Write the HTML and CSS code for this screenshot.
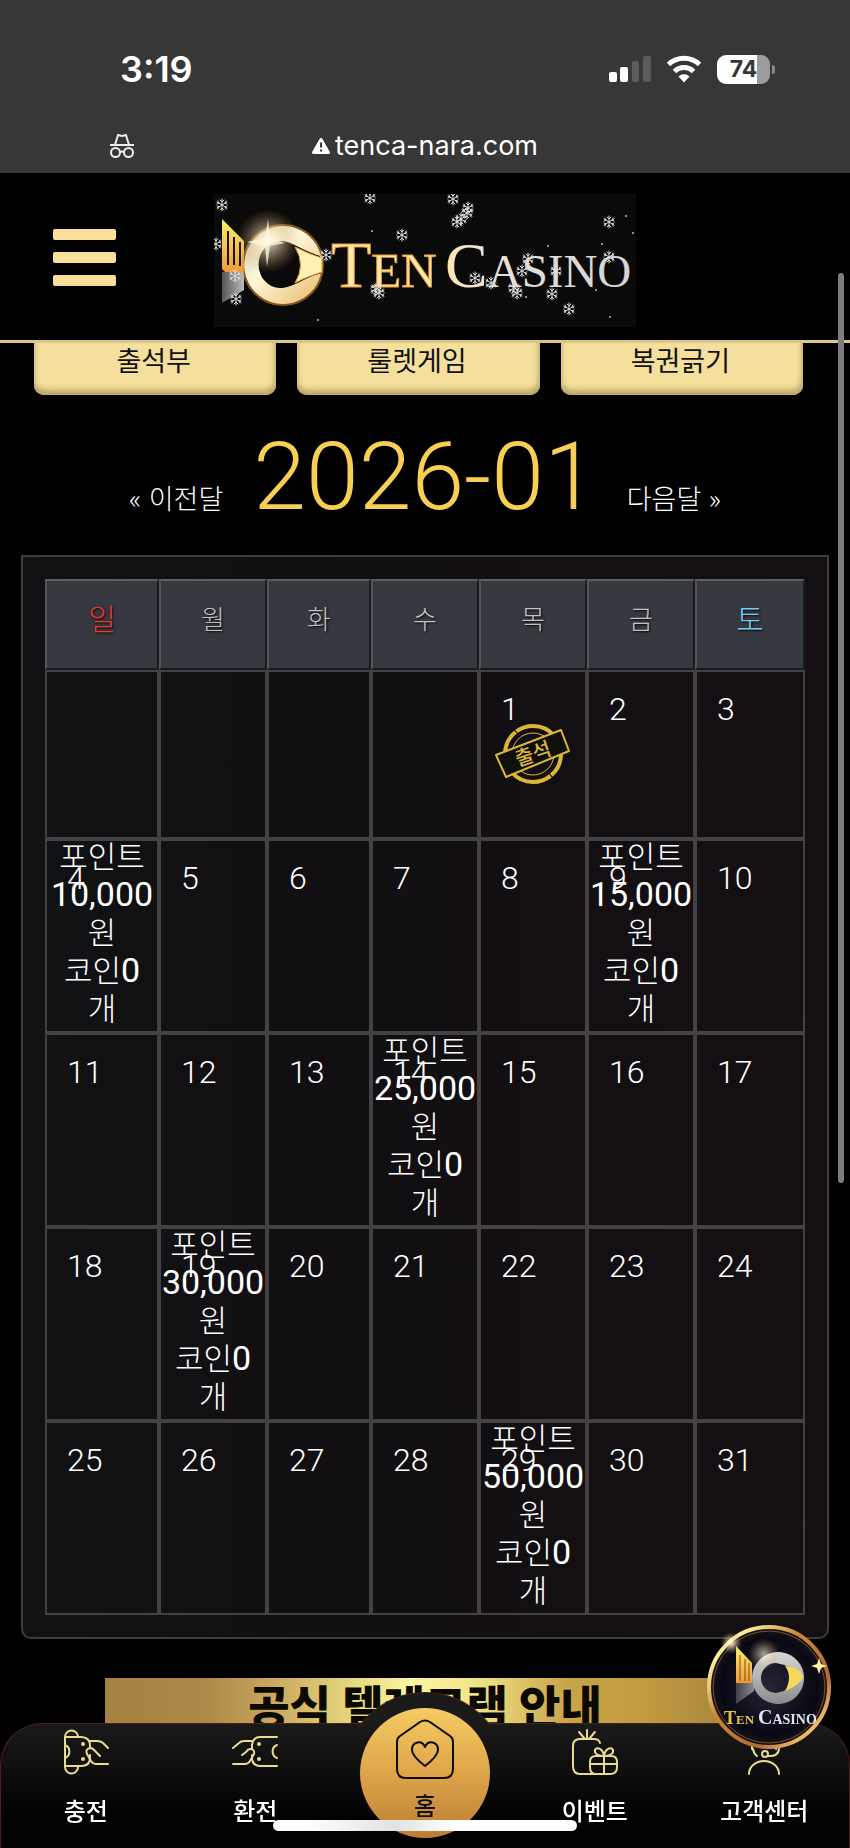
FILE: index.html
```html
<!DOCTYPE html>
<html lang="ko">
<head>
  <meta charset="UTF-8" />
  <meta name="viewport" content="width=device-width, initial-scale=1" />
  <title>TEN CASINO 출석부</title>
  <link rel="stylesheet" href="styles.css">
</head>
<body>

  <div class="phone-bar">
    <div class="status">
      <span class="clock">3:19</span>
      <div class="status-icons">
        <svg width="42" height="28" viewBox="0 0 42 28" fill="#fff">
          <rect x="0" y="17" width="8" height="10" rx="2" />
          <rect x="11" y="12" width="8" height="15" rx="2" />
          <rect x="23" y="6" width="7" height="21" rx="2" fill="#5c5c5c" />
          <rect x="34" y="1" width="8" height="26" rx="2" fill="#5c5c5c" />
        </svg>
        <svg width="36" height="28" viewBox="0 0 36 28">
          <path d="M2.500 9.500a22.500 22.500 0 0 1 31 0" fill="none" stroke="#fff" stroke-width="5" />
          <path d="M8.500 16.500a13.500 13.500 0 0 1 19 0" fill="none" stroke="#fff" stroke-width="5" />
          <path d="M12.500 21.500a8 8 0 0 1 11 0L18 27.500z" fill="#fff" />
        </svg>
        <span class="battery"><span>74</span></span>
      </div>
    </div>
    <div class="address">
      <svg class="private" width="26" height="26" viewBox="0 0 26 26" fill="none" stroke="#eee" stroke-width="2">
        <path d="M1 12h24M6 12l3-10 4 1 4-1 3 10" stroke-linejoin="round" />
        <circle cx="6.500" cy="19.500" r="4.500" />
        <circle cx="19.500" cy="19.500" r="4.500" />
        <path d="M11 19q2-1 4 0" />
      </svg>
      <span class="url">
        <svg width="18" height="16" viewBox="0 0 18 16">
          <path d="M9 1.500L16.500 14.500h-15z" fill="#fff" stroke="#fff" stroke-width="3" stroke-linejoin="round" />
          <path d="M9 4.500v5M9 11.500v2" stroke="#373737" stroke-width="2" />
        </svg>
        tenca-nara.com
      </span>
    </div>
  </div>

  <header class="header">
    <button class="menu" aria-label="메뉴"><i></i><i></i><i></i></button>
    <a class="logo" href="#" aria-label="TEN CASINO">
      <svg viewBox="0 0 422 133">
        <defs>
          <linearGradient id="gold" x1="0" y1="0" x2="0" y2="1">
            <stop offset="0" stop-color="#fff06a" />
            <stop offset="1" stop-color="#ee9a3c" />
          </linearGradient>
          <linearGradient id="ring" x1="0" y1="0" x2="1" y2="1">
            <stop offset="0" stop-color="#cbb995" />
            <stop offset=".4" stop-color="#fff8dc" />
            <stop offset="1" stop-color="#e9b865" />
          </linearGradient>
          <linearGradient id="word" x1="0" y1="0" x2="1" y2="0">
            <stop offset="0" stop-color="#ffe6b0" />
            <stop offset=".2" stop-color="#e8e2d8" />
            <stop offset="1" stop-color="#d4d4d6" />
          </linearGradient>
          <linearGradient id="gray" x1="0" y1="0" x2="1" y2="0">
            <stop offset="0" stop-color="#555" />
            <stop offset="1" stop-color="#bbb" />
          </linearGradient>
          <radialGradient id="flare">
            <stop offset="0" stop-color="#fff" />
            <stop offset=".3" stop-color="#fff3cc" stop-opacity=".7" />
            <stop offset="1" stop-color="#b98a4a" stop-opacity="0" />
          </radialGradient>
          <g id="snow" stroke="#dcdcdc" stroke-width="1" stroke-linecap="round">
            <path d="M0-6V6M-5-3L5 3M-5 3L5-3M-2-5L0-3L2-5M-2 5L0 3L2 5M-5-1L-3-2L-4-4M5-1L3-2L4-4M-5 1L-3 2L-4 4M5 1L3 2L4 4" fill="none" />
          </g>
        </defs>
        <rect width="422" height="133" fill="#0b0a0b" />
        <path d="M8 78h22v18l-22 13z" fill="url(#gray)" />
        <path d="M8 25l22 22v31H11l-3-3z" fill="url(#gold)" />
        <path d="M14 37v34M20 43v28M26 48v24" stroke="#1a1208" stroke-width="2" />
        <circle cx="69" cy="71" r="40" fill="none" stroke="#d88a22" stroke-width="2" opacity=".6" />
        <path d="M69 32a39 39 0 1 0 .1 0zM66 47c12 0 19 8 40 15l2 17c-20 5-28 15-42 15a21 23 0 0 1 0-47z" fill="url(#ring)" fill-rule="evenodd" />
        <path d="M81 53c9 4 17 8 27 11v14c-9 3-18 6-27 11q11-18 0-36z" fill="#fff0b4" stroke="#e2982f" />
        <circle cx="54" cy="47" r="32" fill="url(#flare)" opacity=".8" />
        <path d="M54 25l2 19 15 5-15 3-3 21-2-21-18-4 18-4z" fill="#fff8df" opacity=".8" />
        <g class="wordmark">
          <text class="ten" x="117" y="93" font-size="66">T<tspan font-size="49">EN</tspan></text>
          <text x="231" y="93" font-size="64" fill="url(#word)">C<tspan font-size="47">ASINO</tspan></text>
        </g>
        <use href="#snow" x="8" y="11" /><use href="#snow" x="156" y="4" /><use href="#snow" x="239" y="5" />
        <use href="#snow" x="254" y="14" /><use href="#snow" x="253" y="19" /><use href="#snow" x="247" y="25" /><use href="#snow" x="243" y="28" />
        <use href="#snow" x="188" y="41" /><use href="#snow" x="395" y="28" /><use href="#snow" x="2" y="50" />
        <use href="#snow" x="112" y="61" /><use href="#snow" x="21" y="82" /><use href="#snow" x="22" y="105" />
        <use href="#snow" x="162" y="95" /><use href="#snow" x="165" y="99" /><use href="#snow" x="261" y="84" />
        <use href="#snow" x="277" y="89" /><use href="#snow" x="308" y="77" /><use href="#snow" x="314" y="65" />
        <use href="#snow" x="300" y="94" /><use href="#snow" x="303" y="99" /><use href="#snow" x="342" y="77" />
        <use href="#snow" x="338" y="100" /><use href="#snow" x="355" y="115" /><use href="#snow" x="395" y="63" />
        <g fill="#bbb">
          <circle cx="158" cy="37" r="1" /><circle cx="334" cy="52" r="1" /><circle cx="412" cy="22" r="1" />
          <circle cx="388" cy="50" r="1" /><circle cx="382" cy="96" r="1" /><circle cx="396" cy="123" r="1" />
          <circle cx="104" cy="126" r="1" /><circle cx="312" cy="103" r="1" /><circle cx="419" cy="39" r="1" />
        </g>
      </svg>
    </a>
  </header>

  <main>
    <div class="tabs">
      <button>출석부</button>
      <button>룰렛게임</button>
      <button>복권긁기</button>
    </div>

    <div class="month">
      <a href="#">« 이전달</a>
      <h1>2026-01</h1>
      <a href="#">다음달 »</a>
    </div>

    <div class="panel">
      <table class="calendar">
        <colgroup>
          <col class="c-sun"><col class="c-day"><col class="c-tue"><col class="c-day"><col class="c-day"><col class="c-day"><col class="c-sat">
        </colgroup>
        <thead>
          <tr>
            <th class="sun">일</th><th>월</th><th>화</th><th>수</th><th>목</th><th>금</th><th class="sat">토</th>
          </tr>
        </thead>
        <tbody>
          <tr class="first">
            <td></td><td></td><td></td><td></td>
            <td>
              <span class="day">1</span>
              <svg class="stamp" width="76" height="62" viewBox="0 0 76 62">
                <g fill="none" stroke="#dcb63a">
                  <circle cx="38" cy="31" r="28" stroke-width="4" stroke-dasharray="24 1 43 1 19 1" />
                  <circle cx="38" cy="31" r="21" stroke-width="1" />
                  <path d="M1 32L66 7l8 21L11 54z" fill="#0f0f0c" stroke-width="2" stroke-linejoin="round" />
                </g>
                <text x="38" y="38" text-anchor="middle" transform="rotate(-19 38 31)">출석</text>
              </svg>
            </td>
            <td><span class="day">2</span></td>
            <td><span class="day">3</span></td>
          </tr>
          <tr>
            <td><span class="day">4</span><p>포인트<br><b>10,000</b><br>원<br>코인<b>0</b><br>개</p></td>
            <td><span class="day">5</span></td>
            <td><span class="day">6</span></td>
            <td><span class="day">7</span></td>
            <td><span class="day">8</span></td>
            <td><span class="day">9</span><p>포인트<br><b>15,000</b><br>원<br>코인<b>0</b><br>개</p></td>
            <td><span class="day">10</span></td>
          </tr>
          <tr>
            <td><span class="day">11</span></td>
            <td><span class="day">12</span></td>
            <td><span class="day">13</span></td>
            <td><span class="day">14</span><p>포인트<br><b>25,000</b><br>원<br>코인<b>0</b><br>개</p></td>
            <td><span class="day">15</span></td>
            <td><span class="day">16</span></td>
            <td><span class="day">17</span></td>
          </tr>
          <tr>
            <td><span class="day">18</span></td>
            <td><span class="day">19</span><p>포인트<br><b>30,000</b><br>원<br>코인<b>0</b><br>개</p></td>
            <td><span class="day">20</span></td>
            <td><span class="day">21</span></td>
            <td><span class="day">22</span></td>
            <td><span class="day">23</span></td>
            <td><span class="day">24</span></td>
          </tr>
          <tr>
            <td><span class="day">25</span></td>
            <td><span class="day">26</span></td>
            <td><span class="day">27</span></td>
            <td><span class="day">28</span></td>
            <td><span class="day">29</span><p>포인트<br><b>50,000</b><br>원<br>코인<b>0</b><br>개</p></td>
            <td><span class="day">30</span></td>
            <td><span class="day">31</span></td>
          </tr>
        </tbody>
      </table>
    </div>

    <a class="banner" href="#">공식 텔레그램 안내</a>
  </main>

  <nav class="bottom-nav">
    <div class="bump"></div>
    <a href="#">
      <svg width="46" height="46" viewBox="0 0 46 46">
        <path d="M2 8v30M2 8a6 6 0 0 1 13 0M2 38a6 6 0 0 0 13 0M2 8h16q9 0 9 9v2M2 37h16q9 0 9-8v-3M2 16a7 7 0 0 1 0 13" />
        <path d="M26 12h8q4 0 6 2l5 5M45 35H33q-3 0-5-3l-4-7q-2-5 3-6 3 0 5 3l5 5" />
        <circle cx="20" cy="15" r="1" /><circle cx="20" cy="30" r="1" />
      </svg>
      <span>충전</span>
    </a>
    <a href="#">
      <svg width="46" height="46" viewBox="0 0 46 46">
        <path d="M45 8H28q-7 0-8 8v4M45 37H28q-7 0-8-7v-4M45 16a7 7 0 0 0 0 13" />
        <path d="M20 12h-8q-3 0-5 2l-6 5M1 35h12q3 0 5-3l4-7q1-5-4-5-2 0-4 3l-4 3" />
        <circle cx="27" cy="15" r="1" /><circle cx="27" cy="30" r="1" />
      </svg>
      <span>환전</span>
    </a>
    <a class="home" href="#">
      <svg width="60" height="60" viewBox="0 0 60 60">
        <path d="M5 17L25 3q5-3 10 0l20 14q3 2 3 6v27q0 9-9 9H11q-9 0-9-9V23q0-4 3-6z" />
        <path d="M30 47Q17 37 17 31c0-9 10-10 13-3 3-7 13-6 13 3q0 6-13 16z" />
      </svg>
      <span>홈</span>
    </a>
    <a href="#">
      <svg width="46" height="46" viewBox="0 0 46 46">
        <path d="M15 1v9M7 3l6 7M23 3l-6 7M28 14q-1-4-6-4H8q-7 0-7 7v20q0 8 7 8h30q7 0 7-7v-5q0-6-6-6H24q-6 0-6 6v5q0 7 6 7M18 35h27M32 27v18M32 27c-5 0-10-2-9-6 2-4 8-1 9 6zM32 27c5 0 10-2 9-6-2-4-8-1-9 6z" />
      </svg>
      <span>이벤트</span>
    </a>
    <a href="#">
      <svg width="46" height="46" viewBox="0 0 46 46">
        <path d="M8 45a15 13 0 0 1 30 0M12 20q1 5 4 7M11 20V15a12 12 0 0 1 24 0v5M38 20q-1 7-8 7h-3" />
        <circle cx="24" cy="25" r="3" />
      </svg>
      <span>고객센터</span>
    </a>
  </nav>

  <a class="chat" href="#" aria-label="TEN CASINO">
    <svg viewBox="0 0 124 124">
      <defs>
        <linearGradient id="rim" x1="0" y1="0" x2="1" y2="1">
          <stop offset="0" stop-color="#b07024" />
          <stop offset=".15" stop-color="#fff2a0" />
          <stop offset=".4" stop-color="#c98734" />
          <stop offset=".7" stop-color="#b36a34" />
          <stop offset=".9" stop-color="#ffd27a" />
          <stop offset="1" stop-color="#b07024" />
        </linearGradient>
        <linearGradient id="silver" x1="0" y1="0" x2="0" y2="1">
          <stop offset="0" stop-color="#d8d8d8" />
          <stop offset="1" stop-color="#8b8b8b" />
        </linearGradient>
        <radialGradient id="night">
          <stop offset="0" stop-color="#252535" />
          <stop offset=".8" stop-color="#090914" />
          <stop offset="1" stop-color="#19151a" />
        </radialGradient>
      </defs>
      <circle cx="62" cy="62" r="60" fill="url(#night)" stroke="url(#rim)" stroke-width="4" />
      <circle cx="62" cy="62" r="56" fill="none" stroke="#7e5221" stroke-width="1" />
      <path d="M29 56h18v10l-18 13z" fill="url(#gray)" opacity=".7" />
      <path d="M29 21l16 17v20H29z" fill="url(#gold)" />
      <path d="M33 30v26M38 34v22M42 38v18" stroke="#7d4b12" stroke-width="1" />
      <path d="M71 27a26 26 0 1 0 .1 0zM69 38q16 2 26 15-10 12-26 15a15 15 0 0 1 0-30z" fill="url(#silver)" fill-rule="evenodd" />
      <path d="M78 41q14 1 18 10-1 8-18 15 8-14 0-25z" fill="#f6d95c" />
      <circle cx="57" cy="29" r="16" fill="url(#flare)" opacity=".6" />
      <circle cx="24" cy="18" r="11" fill="url(#flare)" opacity=".9" />
      <path d="M112 33l2 6 6 2-6 2-2 6-2-6-6-2 6-2z" fill="#fff0a8" />
      <g class="wordmark small">
        <text class="ten" x="17" y="99" font-size="18">T<tspan font-size="13">EN</tspan></text>
        <text x="51" y="99" font-size="20">C<tspan font-size="14">ASINO</tspan></text>
      </g>
    </svg>
  </a>

  <div class="scroll-thumb"></div>
  <div class="home-indicator"></div>

</body>
</html>
```
FILE: styles.css
```css
* { box-sizing: border-box; }
body {
  margin: 0;
  background: #000;
  color: #fff;
  font-family: Roboto, "Noto Sans CJK KR", sans-serif;
  font-weight: 300;
}
a { color: inherit; text-decoration: none; }
button { font: inherit; border: none; cursor: pointer; }

/* phone top */
.phone-bar {
  height: 173px;
  padding-top: 48px;
  background: #373737;
  font-family: Inter, sans-serif;
}
.status {
  display: flex;
  align-items: center;
  justify-content: space-between;
  height: 42px;
  padding: 0 80px 0 120px;
}
.clock { font-size: 36px; font-weight: 600; }
.status-icons { display: flex; align-items: center; gap: 15px; }
.battery {
  position: relative;
  width: 53px;
  height: 29px;
  border-radius: 9px;
  background: linear-gradient(90deg, #fff 75%, #9c9c9c 75%);
  color: #373737;
  font-size: 23px;
  font-weight: 700;
  line-height: 29px;
  text-align: center;
}
.battery::after {
  content: "";
  position: absolute;
  right: -5px;
  top: 10px;
  width: 3px;
  height: 9px;
  border-radius: 0 4px 4px 0;
  background: #8c8c8c;
}
.address {
  position: relative;
  display: flex;
  justify-content: center;
  padding-top: 40px;
}
.private { position: absolute; left: 109px; top: 43px; }
.url {
  display: flex;
  align-items: center;
  gap: 5px;
  font-size: 27px;
  font-weight: 400;
  line-height: 32px;
}

/* header */
.header {
  position: sticky;
  top: 0;
  z-index: 2;
  display: flex;
  justify-content: center;
  align-items: center;
  height: 170px;
  padding-top: 8px;
  background: #000;
  border-bottom: 3px solid #d9c78a;
}
.menu {
  position: absolute;
  left: 53px;
  top: 56px;
  display: flex;
  flex-direction: column;
  gap: 12px;
  width: 63px;
  padding: 0;
  background: none;
}
.menu i { height: 11px; border-radius: 2px; background: #f8e09a; }
.logo { width: 50%; max-width: 422px; }
.logo svg, .chat svg { display: block; width: 100%; }
.wordmark { font-family: "Liberation Serif", serif; font-weight: 400; }
.wordmark .ten { fill: #ffe9ae; stroke: #e09a35; stroke-width: 1; }
.wordmark.small { fill: #e2e4ec; font-weight: 700; }
.wordmark.small .ten { fill: #e9c04e; stroke: none; }

/* tabs */
.tabs {
  display: flex;
  gap: 21px;
  margin-top: -19px;
  padding: 0 47px 0 34px;
}
.tabs button {
  flex: 1;
  height: 71px;
  padding: 0 3px 0 0;
  border-radius: 10px;
  background: #f4e09c;
  box-shadow: inset 0 -5px 6px #b9a566, inset -2px 0 4px #d5c27f;
  color: #111;
  font-size: 27px;
  font-weight: 400;
}

.month {
  display: flex;
  justify-content: center;
  align-items: baseline;
  gap: 30px;
  height: 160px;
  font-family: "Noto Sans CJK KR", sans-serif;
  font-size: 27px;
}
.month h1 {
  margin: 0;
  color: #f7cf52;
  font-family: Roboto, sans-serif;
  font-size: 95px;
  font-weight: 300;
  line-height: 164px;
}

/* calendar */
.panel {
  margin: 0 21px;
  padding: 22px;
  border: 2px solid #3d3c3f;
  border-radius: 0 0 10px 10px;
  background: linear-gradient(90deg, #101214, #120f12 30%, #130f12);
}
.calendar {
  width: 100%;
  table-layout: fixed;
  border-collapse: separate;
  border-spacing: 0;
}
.c-sun { width: 114px; }
.c-day { width: 108px; }
.c-tue { width: 104px; }
.c-sat { width: 110px; }
.calendar th {
  height: 91px;
  padding: 0 0 10px;
  background: #363840;
  border: 2px solid;
  border-color: #5d5e62 #191a1d #191a1d #55565b;
  color: #c4c4c4;
  font-size: 26px;
  font-weight: 300;
  line-height: 36px;
  text-shadow: 1px 1px 2px #000;
}
.calendar .sun { color: #ea3a30; font-size: 30px; }
.calendar .sat { color: #7cc8f4; font-size: 30px; }
.calendar td {
  position: relative;
  height: 194px;
  padding: 0;
  border: 2px solid #434144;
  vertical-align: top;
}
.calendar .first td { height: 169px; }
.calendar p {
  margin: -2px 0 0;
  font-size: 31px;
  line-height: 38px;
  text-align: center;
  white-space: nowrap;
}
.calendar b {
  font-size: 34px;
  font-weight: 400;
  line-height: 30px;
}
.day {
  position: absolute;
  left: 20px;
  top: 18px;
  font-size: 32px;
  line-height: 38px;
}
.stamp { position: absolute; left: 14px; top: 51px; }
.stamp text { fill: #dcb63a; font-size: 20px; font-weight: 500; }

.banner {
  display: block;
  height: 100px;
  margin: 39px 105px 0;
  background: linear-gradient(90deg, #a5823f, #ad8947 16%, #cfae62 28%, #e8dd82 40%, #fbf6a4 48%, #f0e586 58%, #c9a54a 72%, #c09a3e 85%, #a5823f);
  color: #0c0900;
  font-size: 45px;
  font-weight: 900;
  line-height: 62px;
  text-align: center;
}

/* bottom menu */
.bottom-nav {
  position: fixed;
  left: 0;
  right: 0;
  bottom: 0;
  z-index: 3;
  display: flex;
  height: 125px;
  border: 1px solid #4b211d;
  border-bottom: none;
  border-radius: 42px 42px 0 0;
  background: linear-gradient(#191a19, #0c0b0d 45%, #020202 75%);
}
.bump {
  position: absolute;
  left: 50%;
  top: -32px;
  width: 164px;
  height: 34px;
  margin-left: -82px;
  overflow: hidden;
}
.bump::before {
  content: "";
  display: block;
  height: 164px;
  border: 1px solid #4b211d;
  border-radius: 50%;
  background: #191a19;
}
.bottom-nav a {
  position: relative;
  flex: 1;
  display: flex;
  flex-direction: column;
  align-items: center;
  padding-top: 5px;
  font-size: 24px;
  font-weight: 500;
  line-height: 36px;
}
.bottom-nav svg {
  margin-bottom: 19px;
  fill: none;
  stroke: #e8dc90;
  stroke-width: 2;
  stroke-linecap: round;
  stroke-linejoin: round;
}
.bottom-nav .home {
  flex: none;
  width: 130px;
  height: 130px;
  margin: -16px 20px 0;
  padding-top: 11px;
  border-radius: 50%;
  background: linear-gradient(#f6cb62, #dda54a 50%, #bd7d34);
  color: #111;
}
.bottom-nav .home svg { margin-bottom: 10px; stroke: #0c0a06; }

.chat {
  position: fixed;
  right: 19px;
  bottom: 99px;
  z-index: 4;
  width: 124px;
}
.scroll-thumb {
  position: fixed;
  right: 6px;
  top: 273px;
  z-index: 5;
  width: 6px;
  height: 910px;
  border-radius: 3px;
  background: #7f7c81;
}
.home-indicator {
  position: fixed;
  left: 50%;
  bottom: 17px;
  z-index: 5;
  width: 304px;
  height: 11px;
  margin-left: -152px;
  border-radius: 6px;
  background: linear-gradient(90deg, #fff 10%, #e2e2e4 40%, #fff 60%);
}
```
